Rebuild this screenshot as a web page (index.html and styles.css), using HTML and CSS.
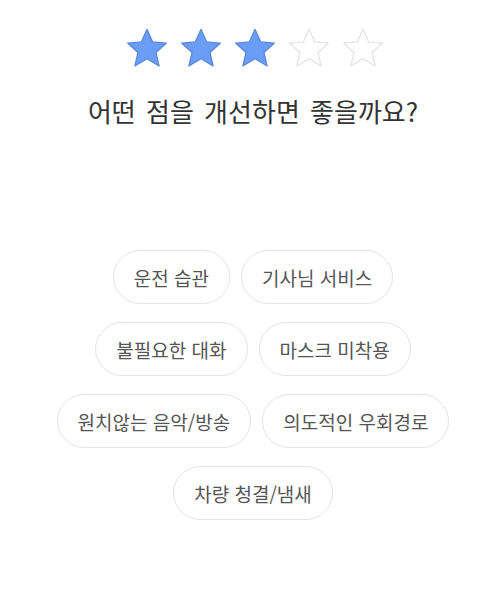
FILE: index.html
```html
<!DOCTYPE html>
<html lang="ko">
<head>
<meta charset="UTF-8">
<meta name="viewport" content="width=device-width, initial-scale=1.0">
<title>평가</title>
<link rel="stylesheet" href="styles.css">
</head>
<body>
<div class="page">
<div class="stars">
<svg class="star filled" viewBox="0 0 24 24"><path d="M12 1.8l3.1 6.9 7.4.7-5.6 5 1.7 7.4L12 17.9l-6.6 3.9 1.7-7.4-5.6-5 7.4-.7z"/></svg>
<svg class="star filled" viewBox="0 0 24 24"><path d="M12 1.8l3.1 6.9 7.4.7-5.6 5 1.7 7.4L12 17.9l-6.6 3.9 1.7-7.4-5.6-5 7.4-.7z"/></svg>
<svg class="star filled" viewBox="0 0 24 24"><path d="M12 1.8l3.1 6.9 7.4.7-5.6 5 1.7 7.4L12 17.9l-6.6 3.9 1.7-7.4-5.6-5 7.4-.7z"/></svg>
<svg class="star" viewBox="0 0 24 24"><path d="M12 1.8l3.1 6.9 7.4.7-5.6 5 1.7 7.4L12 17.9l-6.6 3.9 1.7-7.4-5.6-5 7.4-.7z"/></svg>
<svg class="star" viewBox="0 0 24 24"><path d="M12 1.8l3.1 6.9 7.4.7-5.6 5 1.7 7.4L12 17.9l-6.6 3.9 1.7-7.4-5.6-5 7.4-.7z"/></svg>
</div>
<h2 class="question">어떤 점을 개선하면 좋을까요?</h2>
<div class="chips">
<div class="chip-row">
<button class="chip">운전 습관</button>
<button class="chip">기사님 서비스</button>
</div>
<div class="chip-row">
<button class="chip">불필요한 대화</button>
<button class="chip">마스크 미착용</button>
</div>
<div class="chip-row">
<button class="chip">원치않는 음악/방송</button>
<button class="chip">의도적인 우회경로</button>
</div>
<div class="chip-row">
<button class="chip">차량 청결/냄새</button>
</div>
</div>
</div>
</body>
</html>
```

FILE: styles.css
```css
body {
margin: 0;
padding: 0;
background-color: #fff;
font-family: "Noto Sans CJK KR", "Noto Sans", sans-serif;
color: #333;
}
.page {
padding: 26px 0 0 6px;
display: flex;
flex-direction: column;
align-items: center;
}
.stars {
display: flex;
gap: 10px;
padding-left: 4px;
}
.star {
width: 44px;
height: 44px;
fill: #fff;
stroke: #e2e2e2;
stroke-width: 0.7;
stroke-linejoin: round;
}
.star.filled {
fill: #6a9df6;
stroke: #5a88dc;
}
.question {
margin: 24px 0 0;
font-size: 26px;
font-weight: 400;
word-spacing: 3px;
color: #333;
line-height: 34px;
}
.chips {
margin-top: 122px;
display: flex;
flex-direction: column;
align-items: center;
gap: 18px;
}
.chip-row {
display: flex;
gap: 11px;
}
.chip {
height: 54px;
padding: 0 20px;
background-color: #fff;
border: 1.5px solid #e4e4e4;
border-radius: 27px;
font-family: inherit;
font-size: 19px;
color: #555;
cursor: pointer;
}
```
